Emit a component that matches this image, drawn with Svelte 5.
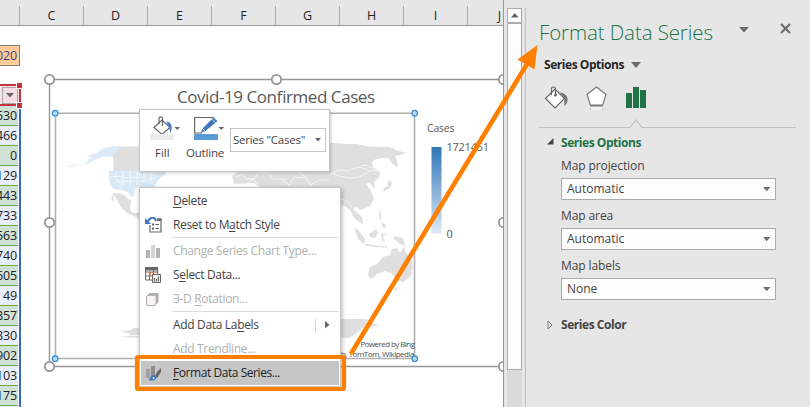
<script>
  const columns = ['C', 'D', 'E', 'F', 'G', 'H', 'I', 'J'];
  const rows = ['530', '466', '0', '129', '443', '733', '563', '740', '605', '49', '857', '830', '902', '103', '175'];
  const outerHandles = [[49.5, 79.5], [276.5, 79.5], [503.5, 79.5], [49.5, 222.5], [503.5, 222.5], [49.5, 366.5], [503.5, 366.5]];
  const innerHandles = [[55.2, 113.2], [414.7, 113.2], [55.2, 358.7], [414.7, 358.7]];
  const fields = [
    ['Map projection', 'Automatic'],
    ['Map area', 'Automatic'],
    ['Map labels', 'None']
  ];
  const menu = [
    { pre: '', key: 'D', post: 'elete' },
    { pre: 'Reset to M', key: 'a', post: 'tch Style', icon: 'reset' },
    { sep: true },
    { pre: 'Change Series Chart T', key: 'y', post: 'pe...', icon: 'chart', off: true },
    { pre: 'S', key: 'e', post: 'lect Data...', icon: 'data' },
    { pre: '3-D ', key: 'R', post: 'otation...', icon: 'cube', off: true },
    { sep: true },
    { pre: 'Add Data La', key: 'b', post: 'els', sub: true },
    { pre: 'Add T', key: 'r', post: 'endline...', off: true },
    { pre: '', key: 'F', post: 'ormat Data Series...', icon: 'format', hot: true }
  ];
</script>

<div class="window">
  <main class="sheet">
    <div class="heads">
      <span class="head stub"></span>
      {#each columns as c}<span class="head">{c}</span>{/each}
    </div>
    <div class="grid">
      <div class="colb">
        <div class="date">020</div>
        <div class="filter"><span class="fbtn"><svg width="8" height="5"><path d="M0 0h8L4 4.5z" fill="#666" /></svg></span></div>
        <div class="cells">
          {#each rows as r}<div class="cell">{r}</div>{/each}
          <div class="cell"></div>
        </div>
      </div>
    </div>
    <i class="knob k1"></i><i class="knob k2"></i>

    <svg class="chart" width="503" height="407" viewBox="0 0 503 407">
      <defs>
        <linearGradient id="scale" x1="0" y1="0" x2="0" y2="1">
          <stop offset="0" stop-color="#2e75b6" />
          <stop offset="1" stop-color="#deebf7" />
        </linearGradient>
      </defs>
      <path d="M49.5 366.500V79.500H503M49.500 366.500H503" fill="none" stroke="#969696" stroke-width="1.4" />
      <g fill="#dfdfdf">
        <path d="M119 146.500h21V171H113.500v-12l-1.500-4z" />
        <path d="M113.500 193l6.500.5 5 2 3 3.500 3 1-1 8 2 5 5 0 2-1v6l3 6-6-7-9-4-6-6-5-9-3-3 1 8-3-5z" />
        <path d="M329 142.500l16 1.500h12l10 2.500 23 .5 7 3.500 10 2.500-7 2-5 1 2 4 1 7-6-4-4-5-8 0-6 2-2 3 1 4 8 5-3 7-4 3 1 7-3-3-3-4-3 2 5 7 3 8-4 7-9 4-5-3-3 2 9 8 1 8-5-4-4-3-4-8-5-4-7-1H322V146z" />
        <path d="M235 173.500l6-2.500 12-1 20 2 20-2 49-1v20H262l-8-6-20 1-2-8z" />
        <path d="M354 227l5 4 6 8-1 5-6-5zM365 243.500l11 2 11 .5 0 1.500-12-.5-10-1.500zM369 234l7-5 2 4-3 5-5-1zM381 234l6 0-4 2 2 6-3-2zM394 236l9 2 2 8-5-2-6-5zM388 181l4 1-1 5-5 3-3 2 1-4 4-2zM392 159l5 4-1 4-4-4zM379 210l2 3 0 7-2-3zM381 222l5 3-1 4-3-3zM395 288l3 1-3 2z" />
        <path d="M370 279l-2-5 2-7 7-3 6-7 7-2 2-6 5-1 3 5 4-7 2 7 5 5 2 9-2 9-8 6-5-1-7-8-6-2-8 3-4 4z" />
        <path d="M340 319h24l6 1-4 2 9 2 4 1-8 2-9 1-6 6-7 4h-9zM121 331.500l10-1.500 3-2 6 0v7h-9l-2-1.500zM120 336.500l7 0 2-1 11 .5v1.500h-14z" />
      </g>
      <path d="M122 146.300l-8 8-3 2.500-7-.5-8 3-4 2.500-9 3 6-4-1-1.500 5-1.500-5-2 9-3 5-4 10-2.500z" fill="#dce9f6" />
      <path d="M78 164.500l-10 2.500M62 208l2 1" stroke="#ebebeb" />
      <path d="M109 171H165l1 3-7 5-5 8-8 3-6-4-5 3-2 9-5-6-6-2-8-1-4-5-1-7z" fill="#d9e8f6" />
      <g fill="none" stroke="#fff" stroke-width=".8">
        <path d="M116 171v7l4 5v6M123 171v16M130 171v14M137 171v14M144 171v12M151 171v12M110 176.500h12M116 181.500h18M123 177.500h22M137 174h20M140 182l14-4" opacity=".75" />
        <path d="M331 173l9-3 8 1 9-4 6 1 6 3 8-1M331 173l8 3 10 2 10-1 6-3 5-3M361 166l5-1 8 4 6 3v6l-5 1M341 199l8 3 3 6M345 202l-2 7M236 177l6-3 4 5 8 0 5-7 10 1 4 6 12 0M246 184l7-5 5 6M282 180l7 5 5-8 12 1 5 7 8-5 10 0M299 172l7 5" opacity=".85" />
      </g>
      <path d="M55.500 113V358.500M55 113.200H414.500V358.500H55" fill="none" stroke="#b0b0b0" stroke-width="1.600" />
      <text x="177" y="103" font-size="17" textLength="198" fill="#595959">Covid-19 Confirmed Cases</text>
      <text x="427" y="132" font-size="10.5" textLength="27.5" fill="#595959">Cases</text>
      <rect x="431.5" y="147" width="10" height="86.5" fill="url(#scale)" />
      <text x="446.5" y="151" font-size="11" textLength="42.5" fill="#595959">1721451</text>
      <text x="446.5" y="238" font-size="11" fill="#595959">0</text>
      <text x="360.5" y="347.3" font-size="8" textLength="54.5" fill="#505050">Powered by Bing</text>
      <text x="339" y="357.2" font-size="8" textLength="75.5" fill="#505050">fo, TomTom, Wikipedia</text>
      {#each outerHandles as [x, y]}<circle cx={x} cy={y} r="4.7" fill="#fff" stroke="#969696" stroke-width="1.8" />{/each}
      {#each innerHandles as [x, y]}<circle cx={x} cy={y} r="2.8" fill="#b5d9f7" stroke="#2589dc" stroke-width="1.1" />{/each}
    </svg>
  </main>

  <div class="scroll">
    <div class="up"><svg width="8" height="5"><path d="M0 4.5h7.6L3.8 0z" fill="#666" /></svg></div>
    <div class="thumb"></div>
  </div>

  <aside class="pane">
    <header>
      <h1>Format Data Series</h1>
      <svg class="drop" width="10" height="6"><path d="M0 0h10L5 5.5z" fill="#6a6a6a" /></svg>
      <svg class="close" width="11" height="11"><path d="M1 1l9 9M10 1l-9 9" stroke="#6a6a6a" stroke-width="2.1" /></svg>
    </header>
    <div class="which"><b>Series Options</b><svg width="10" height="6"><path d="M0 0h10L5 6z" fill="#6a6a6a" /></svg></div>
    <div class="tabs">
      <svg width="24" height="24" viewBox="0 0 24 24">
        <path d="M1.500 12.500L11 3l9.500 9.500L11 22z" fill="#fff" stroke="#666" stroke-width="1.2" />
        <path d="M7.500 9V2.500C7.500.4 11.500.4 11.500 2.500V8" fill="none" stroke="#666" stroke-width="1.1" />
        <circle cx="11.500" cy="9" r="1.5" fill="#666" />
        <path d="M15.500 6.500c5 0 9 4 8 8-.4 2.500-1.500 4-3 6-.2-2-.2-4-.2-6L20.500 12z" fill="#777" />
      </svg>
      <svg width="22" height="24" viewBox="0 0 22 24">
        <path d="M5.500 20h11v4h-11z" fill="#f2f2f2" />
        <path d="M10.500 1L20 8.500 16.500 19.500h-12L1 8.500z" fill="#fff" stroke="#777" stroke-width="1.200" />
        <path d="M4.500 19.500h12" stroke="#777" stroke-width="2" />
        <path d="M4.500 22l-.5 2M16.500 22l.5 2" stroke="#b5b5b5" />
      </svg>
      <svg width="20" height="24" viewBox="0 0 20 24"><path d="M0 7h6v15H0zM7 1h6v21H7zM14 4h6v18h-6z" fill="#217346" /></svg>
    </div>
    <svg class="rule" width="257" height="10"><path d="M0 8.500H91l6-7.500 6 7.500H257" fill="none" stroke="#c2c2c2" stroke-width="1.200" /></svg>
    <div class="group open"><svg width="7" height="7"><path d="M6.500 0v6.500H0z" fill="#444" /></svg><b>Series Options</b></div>
    {#each fields as [label, value]}
      <div class="label">{label}</div>
      <div class="select"><span>{value}</span><svg width="8" height="5"><path d="M0 0h7.500L3.700 4.200z" fill="#707070" /></svg></div>
    {/each}
    <div class="group shut"><svg width="7" height="10"><path d="M1 1l4 4-4 4z" fill="#fff" stroke="#777" /></svg><b>Series Color</b></div>
  </aside>

  <div class="mini">
    <div class="tool fill">
      <svg width="30" height="24" viewBox="0 0 30 24">
        <path d="M4 11.500L12 4l8 7.500-8 7z" fill="#fff" stroke="#666" stroke-width="1.200" />
        <path d="M9 8V2C9 .4 12.500.4 12.500 2v8" fill="none" stroke="#666" stroke-width="1.200" />
        <path d="M16.500 5.500c5 .5 6.500 5 4 12-.6-3-.8-5-2-7z" fill="#4a7ebb" />
        <path d="M24.500 11h5.500l-2.750 3z" fill="#666" />
        <path d="M0 18h24v6H0z" fill="#ececec" />
      </svg>
      <span>Fill</span>
    </div>
    <div class="tool outline">
      <svg width="30" height="24" viewBox="0 0 30 24">
        <path d="M20 1.500H.6v15.500H8" fill="none" stroke="#666" stroke-width="1.200" />
        <path d="M19.500 1.500l4 3.500-12 10-5 2L9 12z" fill="#4377b8" />
        <path d="M17.500 3l4 3.500M8.500 12.500l3 3" stroke="#fff" stroke-width=".7" />
        <path d="M24.500 11h5.500l-2.750 3z" fill="#666" />
        <path d="M0 18h24v6H0z" fill="#5b9bd5" />
      </svg>
      <span>Outline</span>
    </div>
    <div class="pick"><span>Series "Cases"</span><svg width="6" height="4"><path d="M0 0h6L3 3.500z" fill="#666" /></svg></div>
  </div>

  <div class="menu">
    {#each menu as m}
      {#if m.sep}
        <div class="sep"></div>
      {:else}
        <div class="item" class:off={m.off} class:hot={m.hot}>
          <span class="icon">
            {#if m.icon === 'reset'}
              <svg width="17" height="16" viewBox="0 0 17 16"><path d="M12 2h4v13H5V8" fill="none" stroke="#666" stroke-width="1.200" /><path d="M12 1.500h4.500V4H12z" fill="#666" /><path d="M7 7.500h2M7 11.500h2" stroke="#666" stroke-width="2" /><path d="M10.500 7.500h3.500M10.500 11.500h3.500" stroke="#666" /><path d="M2.500 5C5-.5 10-.5 11 4" fill="none" stroke="#3f76b5" stroke-width="2" /><path d="M0 1v6h6z" fill="#3f76b5" /></svg>
            {:else if m.icon === 'chart'}
              <svg width="17" height="16" viewBox="0 0 17 16"><path d="M1 7h4v8H1zM11 5h4v10h-4z" fill="#b3b3b3" /><path d="M6 2h4v13H6z" fill="#d5d5d5" /></svg>
            {:else if m.icon === 'data'}
              <svg width="17" height="16" viewBox="0 0 17 16"><path d="M.6 1h12v12H.6zM.6 5h12M.6 9h6M4.500 5v8M8.500 3v4" fill="#fff" stroke="#666" /><path d="M0 0h13v3.500H0z" fill="#666" /><path d="M4.500 5.500h4M4.500 8h3M5 5v4" stroke="#ed7d31" stroke-width="1.200" /><path d="M7.500 7.500h8v8h-8z" fill="#fff" stroke="#666" /><path d="M9.500 11v3.500M11.500 12v2.500M13.500 9.500v5" stroke="#666" stroke-width="1.300" /></svg>
            {:else if m.icon === 'cube'}
              <svg width="17" height="16" viewBox="0 0 17 16"><path d="M1.500 5.500l3-3H13V11l-3 3.500H2.500l-1-1z" fill="#b4b4b4" stroke="#aaa" stroke-linejoin="round" /><rect x="2" y="5" width="8.500" height="9" rx="1" fill="#f7f3f7" /></svg>
            {:else if m.icon === 'format'}
              <svg width="17" height="18" viewBox="0 0 17 18"><path d="M1 5h4v9H1z" fill="#a0a0a0" /><path d="M6 2h4v10H6z" fill="#8c8c8c" /><path d="M16 4v4l-4 6-2-2 2-4z" fill="#666" /><path d="M4 16.500c1-4 3-5.500 5-5.500l2.500 2c0 3-4 4-7.500 3.500z" fill="#3e78bd" /><circle cx="8.500" cy="14" r="1" fill="#fff" /></svg>
            {/if}
          </span>
          <span class="text">{m.pre}<u>{m.key}</u>{m.post}</span>
          {#if m.sub}<span class="sub"><svg width="5" height="8"><path d="M0 0l4.500 3.800L0 7.600z" fill="#666" /></svg></span>{/if}
        </div>
      {/if}
    {/each}
  </div>

  <svg class="callout" width="810" height="407" viewBox="0 0 810 407">
    <rect x="137" y="357" width="207" height="32" rx="1" fill="none" stroke="#ff8000" stroke-width="4.200" />
    <path d="M352 352L527 64" stroke="#ff8000" stroke-width="4.600" stroke-linecap="round" />
    <path d="M537.500 45l-20 14.500L534.500 69.500z" fill="#ff8000" />
  </svg>
</div>

<style>
  :global(body) { margin: 0; overflow: hidden; }
  .window {
    position: relative; display: flex; width: 810px; height: 407px; overflow: hidden;
    background: #e6e6e6; color: #444; font: 12px/1 'Open Sans', 'Noto Sans', sans-serif;
  }
  svg { display: block; flex: none; }
  .sheet { position: relative; width: 503px; height: 407px; overflow: hidden; border-right: 1px solid #999; box-sizing: content-box; }
  .heads { display: flex; height: 19px; padding-top: 6px; border-bottom: 1px solid #999; background: #e6e6e6; }
  .head { box-sizing: border-box; flex: none; width: 64px; border-right: 1px solid #ababab; text-align: center; font-size: 12.5px; line-height: 20px; color: #222; }
  .stub { width: 20px; }
  .grid { height: 381px; background: #fff; }
  .colb { display: flex; flex-direction: column; width: 22px; padding-top: 19px; }
  .date, .cell { display: flex; justify-content: flex-end; align-items: center; font-size: 12.5px; letter-spacing: -.15px; line-height: 20px; }
  .date { height: 19px; width: 17px; padding-right: 2px; border: solid #7f7f7f; border-width: 1px 1px 1px 0; background: #fc9; color: #3f3f76; line-height: 22px; }
  .filter { display: flex; height: 18px; width: 19px; margin-top: 18px; border: solid #c4323f; border-width: 2px 2px 2px 0; background: #f6e4e7; }
  .fbtn { display: flex; align-items: center; justify-content: center; width: 14px; height: 15px; margin: 1px 0 0 2px; border: 1px solid #aaa; background: #f4dfe3; }
  .cells { border-right: 2px solid #3567c4; width: 19px; }
  .cell { height: 19px; width: 17px; padding-right: 1px; color: #222; background: #d0e1d6; border-bottom: 1px solid #70a84d; line-height: 21px; }
  .cell:nth-child(even) { background: #e8eef9; }
  .knob { position: absolute; left: 16px; width: 5px; height: 5px; background: #c4323f; border: 1px solid #fff; }
  .k1 { top: 82px; }
  .k2 { top: 102px; }
  .chart { position: absolute; left: 0; top: 0; }

  .scroll { display: flex; flex-direction: column; width: 15px; height: 399px; margin: 8px 3px 0; background: linear-gradient(#e6e6e6 20px, #dadada 20px); }
  .up, .thumb { border: 1px solid #ababab; background: #fdfdfd; }
  .up { display: flex; height: 13px; align-items: center; justify-content: center; }
  .thumb { height: 345px; }

  .pane { display: flex; flex-direction: column; flex: 1; height: 399px; margin-top: 8px; padding-left: 13px; border-left: 1px solid #bdbdbd; }
  header { display: flex; height: 46px; align-items: flex-start; }
  h1 { margin: 13px 0 0; width: 200px; white-space: nowrap; color: #217346; font-size: 20.5px; font-weight: 300; line-height: 22px; letter-spacing: -.1px; }
  .drop { margin-top: 19px; }
  .close { margin: 15px 0 0 31px; }
  .which { display: flex; align-items: center; height: 22px; gap: 7px; padding-left: 5px; color: #262626; }
  b { width: 80px; white-space: nowrap; font-weight: 700; letter-spacing: -.45px; line-height: 14px; }
  .tabs { display: flex; gap: 18px; padding: 10px 0 0 5px; height: 24px; }
  .rule { margin-top: 9px; }
  .group { display: flex; align-items: center; height: 20px; padding-left: 8px; }
  .group b { width: auto; margin-left: 7px; }
  .open { margin-top: 4px; color: #217346; }
  .open svg { margin-top: -4px; }
  .label { height: 25px; padding-left: 22px; line-height: 26px; letter-spacing: -.1px; }
  .select { display: flex; align-items: center; justify-content: space-between; width: 204px; height: 20px; margin-left: 22px; padding: 0 4px 0 5px; border: 1px solid #ababab; background: #fdfdfd; margin-bottom: 3px; line-height: 22px; }
  .shut { margin-top: 12px; }

  .mini { position: absolute; left: 139px; top: 109px; display: flex; width: 189px; height: 61px; border: 1px solid #c6c6c6; background: #fff; box-shadow: 1px 1px 3px #0003; font-size: 11.5px; }
  .tool { display: flex; flex-direction: column; padding-top: 6px; gap: 7px; }
  .fill { width: 33px; margin-left: 10px; }
  .outline { margin-left: 11px; width: 35px; }
  .fill span { margin-left: 5px; }
  .outline span { margin-left: -8px; letter-spacing: -.2px; }
  .pick { display: flex; align-items: center; justify-content: space-between; width: 88px; height: 22px; margin: 18px 0 0 1px; padding: 0 4px 0 2px; border: 1px solid #c6c6c6; white-space: nowrap; letter-spacing: -.25px; }

  .menu { position: absolute; left: 139px; top: 187px; width: 198px; height: 196px; padding: 1px; border: 1px solid #c6c6c6; background: #fff; box-shadow: 2px 2px 4px #0003, -1px 0 3px #0002; }
  .item { display: flex; align-items: center; height: 24px; white-space: nowrap; letter-spacing: -.33px; line-height: 26px; }
  .icon { width: 28px; padding-left: 4px; }
  .off { color: #b1b1b1; }
  .hot { background: #c5c5c5; color: #262626; letter-spacing: -.44px; }
  .sep { height: 1px; margin: 0 0 1px 31px; background: #dcdde0; }
  .sub { display: flex; align-items: center; height: 13px; margin-left: auto; margin-right: 9px; padding-left: 9px; border-left: 1px solid #d6d6d6; }
  u { text-underline-offset: 2px; text-decoration-thickness: 1px; text-decoration-skip-ink: none; }
  .callout { position: absolute; left: 0; top: 0; }
</style>
